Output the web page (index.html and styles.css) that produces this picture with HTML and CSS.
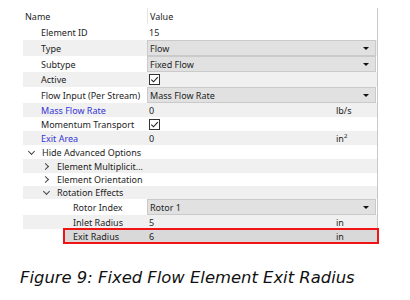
FILE: index.html
```html
<!DOCTYPE html>
<html lang="en">
  <head>
    <meta charset="UTF-8" />
    <title>Fixed Flow Element Exit Radius</title>
    <link rel="stylesheet" href="styles.css">
  </head>
  <body>
    <div class="figure">
      <div class="grid">
        <div class="row head">
          <div class="label lvl0">Name</div>
          <div class="value">Value</div>
        </div>
        <div class="row tall">
          <div class="label lvl1">Element ID</div>
          <div class="value">15</div>
        </div>
        <div class="row drop alt">
          <div class="label lvl1">Type</div>
          <div class="value"><div class="select">Flow<span class="arrow"></span></div></div>
        </div>
        <div class="row drop">
          <div class="label lvl1">Subtype</div>
          <div class="value"><div class="select">Fixed Flow<span class="arrow"></span></div></div>
        </div>
        <div class="row mid alt">
          <div class="label lvl1">Active</div>
          <div class="value"><svg class="check" width="11" height="11" viewBox="0 0 11 11"><rect x="0.5" y="0.5" width="10" height="10" fill="#fff" stroke="#333"/><path d="M2.3 5.6 L4.5 7.8 L8.8 3.2" fill="none" stroke="#222" stroke-width="1.1"/></svg></div>
        </div>
        <div class="row drop">
          <div class="label lvl1">Flow Input (Per Stream)</div>
          <div class="value"><div class="select">Mass Flow Rate<span class="arrow"></span></div></div>
        </div>
        <div class="row alt">
          <div class="label lvl1 blue">Mass Flow Rate</div>
          <div class="value">0<span class="unit">lb/s</span></div>
        </div>
        <div class="row">
          <div class="label lvl1">Momentum Transport</div>
          <div class="value"><svg class="check" width="11" height="11" viewBox="0 0 11 11"><rect x="0.5" y="0.5" width="10" height="10" fill="#fff" stroke="#333"/><path d="M2.3 5.6 L4.5 7.8 L8.8 3.2" fill="none" stroke="#222" stroke-width="1.1"/></svg></div>
        </div>
        <div class="row alt">
          <div class="label lvl1 blue">Exit Area</div>
          <div class="value">0<span class="unit">in<sup>2</sup></span></div>
        </div>
        <div class="row">
          <div class="label group0"><span class="chev down"></span>Hide Advanced Options</div>
          <div class="value"></div>
        </div>
        <div class="row alt">
          <div class="label group1"><span class="chev right"></span>Element Multiplicit...</div>
          <div class="value"></div>
        </div>
        <div class="row short">
          <div class="label group1"><span class="chev right"></span>Element Orientation</div>
          <div class="value"></div>
        </div>
        <div class="row short alt">
          <div class="label group1"><span class="chev down"></span>Rotation Effects</div>
          <div class="value"></div>
        </div>
        <div class="row drop">
          <div class="label lvl2">Rotor Index</div>
          <div class="value"><div class="select">Rotor 1<span class="arrow"></span></div></div>
        </div>
        <div class="row alt">
          <div class="label lvl2">Inlet Radius</div>
          <div class="value">5<span class="unit">in</span></div>
        </div>
        <div class="row selected">
          <div class="label lvl2">Exit Radius</div>
          <div class="value">6<span class="unit">in</span></div>
          <div class="highlight"></div>
        </div>
      </div>
      <p class="caption">Figure 9: Fixed Flow Element Exit Radius</p>
    </div>
  </body>
</html>
```

FILE: styles.css
```css
body {
  margin: 0;
  background: #fff;
  font-family: "Noto Sans", sans-serif;
  color: #1e1e1e;
}

.figure {
  padding: 8px 0 0 23px;
}

.grid {
  width: 354px;
  border-right: 1px solid #c9c9c9;
  font-size: 9px;
}

.row {
  position: relative;
  display: flex;
  height: 14px;
  align-items: center;
}

.row.head,
.row.tall,
.row.drop {
  height: 16px;
}

.row.mid {
  height: 15px;
}

.row.short {
  height: 13px;
}

.row.alt {
  background: #f0f0f0;
}

.row.selected {
  background: #d9d9d9;
  margin-left: 41px;
}

.row.selected .label {
  width: 83px;
  padding-left: 9px;
}

.label {
  box-sizing: border-box;
  width: 124px;
  flex-shrink: 0;
  white-space: nowrap;
  display: flex;
  align-items: center;
}

.lvl0 {
  padding-left: 2px;
}

.lvl1 {
  padding-left: 18px;
}

.lvl2 {
  padding-left: 50px;
}

.group0 {
  padding-left: 0;
}

.group1 {
  padding-left: 15px;
}

.head .value {
  border-left: 1px solid #e6e6e6;
  align-self: stretch;
}

.value {
  box-sizing: border-box;
  flex: 1;
  position: relative;
  padding-left: 2px;
  display: flex;
  align-items: center;
  height: 100%;
}

.blue {
  color: #3535d4;
}

.unit {
  position: absolute;
  left: 189px;
}

.unit sup {
  font-size: 6px;
  vertical-align: 4px;
}

.select {
  box-sizing: border-box;
  margin-left: -2px;
  width: 229px;
  height: 100%;
  padding-left: 2px;
  background: #e1e1e1;
  border: 1px solid #cacaca;
  display: flex;
  align-items: center;
  position: relative;
}

.arrow {
  position: absolute;
  right: 6px;
  top: 6px;
  border-left: 3px solid transparent;
  border-right: 3px solid transparent;
  border-top: 3px solid #111;
}

.check {
  display: block;
}

.chev {
  width: 16px;
  margin-right: 3px;
  display: inline-flex;
  justify-content: center;
  align-items: center;
  flex-shrink: 0;
}

.chev::before {
  content: "";
  width: 4px;
  height: 4px;
  border-right: 1.3px solid #444;
  border-bottom: 1.3px solid #444;
}

.chev.down::before {
  transform: translateY(-1px) rotate(45deg);
}

.chev.right::before {
  transform: translateX(-1px) rotate(-45deg);
}

.highlight {
  position: absolute;
  left: -1px;
  right: -2px;
  top: -1px;
  bottom: -1px;
  border: 2px solid #f01414;
}

.caption {
  margin: 25px 0 0 -3px;
  font-family: "DejaVu Sans", sans-serif;
  font-style: italic;
  font-size: 16.4px;
  color: #111;
}
```
